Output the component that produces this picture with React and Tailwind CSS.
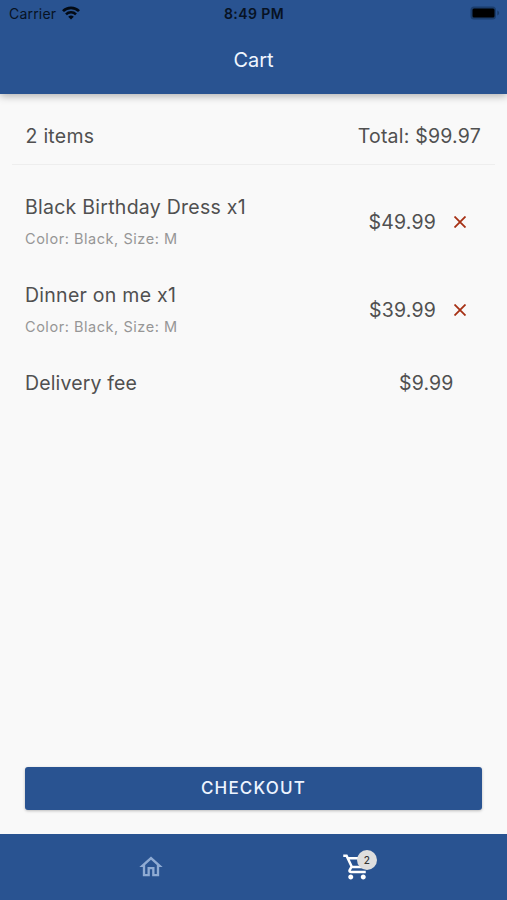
import React from 'react';
import { MdOutlineHome, MdOutlineShoppingCart } from 'react-icons/md';

const items = [
  { name: 'Black Birthday Dress x1', detail: 'Color: Black, Size: M', price: '$49.99' },
  { name: 'Dinner on me x1', detail: 'Color: Black, Size: M', price: '$39.99' },
];

function WifiIcon() {
  return (
    <svg viewBox="0 0 18 14" className="mb-[1px] ml-[6px] h-[14px] w-[18px]" fill="none" stroke="#030a14">
      <path d="M1 5.1a11.3 11.3 0 0 1 16 0" strokeWidth="2.7" />
      <path d="M4 8.3a7 7 0 0 1 10 0" strokeWidth="2.5" />
      <path d="M9 13.5 6.2 10.8a4 4 0 0 1 5.6 0Z" fill="#030a14" stroke="none" />
    </svg>
  );
}

function StatusBar() {
  return (
    <div className="grid h-[27px] grid-cols-[1fr_auto_1fr] items-center pr-[7px] pl-[9px] text-[14px] leading-none text-[#071223]">
      <div className="flex items-center">
        <span className="tracking-[0.2px]">Carrier</span>
        <WifiIcon />
      </div>
      <span className="mr-[1px] text-center text-[14px] font-semibold tracking-[0.4px]">8:49 PM</span>
      <svg viewBox="0 0 30 14" className="mb-[1px] h-[14px] w-[30px] justify-self-end">
        <rect x="0.5" y="0.5" width="25.5" height="13" rx="3.5" fill="#1b3d6c" />
        <rect x="2.5" y="2.5" width="22" height="9" rx="1.5" fill="#000" />
        <path d="M27.3 4.5c2.4 1 2.4 4 0 5Z" fill="#1b3d6c" />
      </svg>
    </div>
  );
}

function CloseIcon() {
  return (
    <svg viewBox="0 0 12 12" className="h-[12px] w-[12px]" stroke="#a63014" strokeWidth="1.8">
      <path d="M.5.5l11 11M11.5.5l-11 11" />
    </svg>
  );
}

function CartItem({ name, detail, price }) {
  return (
    <div className="flex h-[88px] items-center justify-between pr-[41.5px] pl-[25px]">
      <div>
        <div className="text-[19.5px] leading-[26px] tracking-[0.26px]">{name}</div>
        <div className="mt-[8px] text-[14.5px] leading-[22px] tracking-[0.54px] text-[#969696]">{detail}</div>
      </div>
      <div className="flex items-center gap-[17.5px]">
        <span className="text-[19.5px] leading-[26px] tracking-[0.2px]">{price}</span>
        <CloseIcon />
      </div>
    </div>
  );
}

export default function App() {
  return (
    <div className="flex h-[900px] w-[507px] flex-col overflow-hidden bg-[#f9f9f9] font-['Inter','Liberation_Sans',sans-serif] text-[#505050]">
      <header className="z-10 h-[94px] shrink-0 bg-[#295391] shadow-[0_2px_8px_rgba(0,0,0,0.3)]">
        <StatusBar />
        <h1 className="pt-[19px] text-center text-[20px] leading-[28px] text-[#f0f6ff]">Cart</h1>
      </header>
      <main className="flex flex-1 flex-col">
        <div className="mx-[12px] flex h-[71px] items-center justify-between border-b border-[#eeeeee] pt-[16px] pr-[14px] pl-[13.5px] text-[19.5px]">
          <span className="tracking-[0.25px]">2 items</span>
          <span className="tracking-[0.22px]">Total: $99.97</span>
        </div>
        <div className="pt-[13px]">
          {items.map((item) => (
            <CartItem key={item.name} {...item} />
          ))}
          <div className="flex h-[59px] items-center justify-between pr-[53.5px] pl-[25px] text-[19.5px] tracking-[0.15px]">
            <span>Delivery fee</span>
            <span>$9.99</span>
          </div>
        </div>
        <button className="mx-[25px] mt-auto mb-[24px] h-[43px] rounded-[3px] bg-[#295391] text-[17px] font-medium tracking-[1.2px] text-[#edf4ff] shadow-[0_1px_3px_rgba(0,0,0,0.25)]">
          CHECKOUT
        </button>
      </main>
      <nav className="flex h-[66px] shrink-0 bg-[#295391] px-[47px]">
        <div className="flex flex-1 justify-center pt-[19px]">
          <MdOutlineHome className="ml-[1px] h-[28px] w-[28px] text-[#8fabd3]" />
        </div>
        <div className="flex flex-1 justify-center pt-[18px]">
          <div className="relative h-[30px] w-[30px]">
            <MdOutlineShoppingCart className="h-[30px] w-[30px] text-white" />
            <span className="absolute -top-[2px] left-[15px] flex h-[20px] w-[20px] items-center justify-center rounded-full bg-[#dedede] text-[10px] font-medium text-[#333333]">
              2
            </span>
          </div>
        </div>
      </nav>
    </div>
  );
}
